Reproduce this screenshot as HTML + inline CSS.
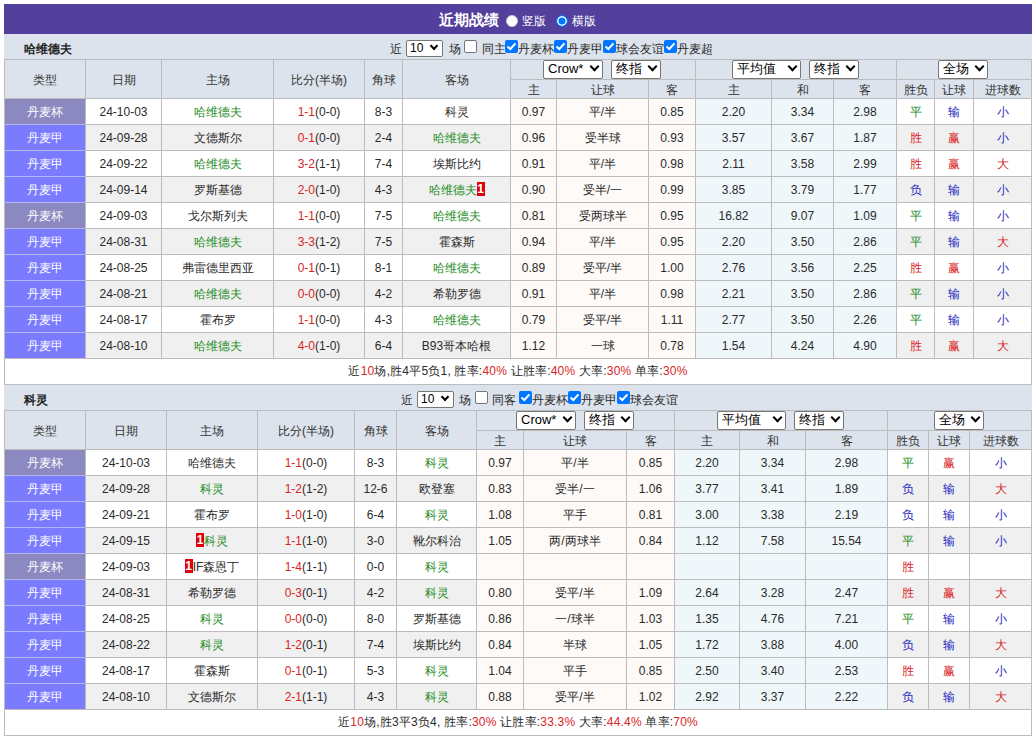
<!DOCTYPE html><html><head><meta charset="utf-8"><style>
*{box-sizing:border-box}
html,body{margin:0;padding:0;background:#fff;width:1034px;height:737px;overflow:hidden}
body{font-family:"Liberation Sans",sans-serif;font-size:12px;color:#2a2a2a;position:relative}
.a{position:absolute}
.bar{position:absolute;left:4px;width:1028px;height:30px;top:4px;background:#52409c}
.tb{position:absolute;left:4px;width:1028px;height:25px;background:#dce3ec}
.ttl{position:absolute;left:20px;font-weight:bold;color:#222;font-size:12px}
.hl{position:absolute;height:1px;background:#bcbcbc}
.vl{position:absolute;width:1px;background:#bcbcbc}
.c{position:absolute;text-align:center;white-space:nowrap;line-height:25px;height:25px;overflow:visible}
.h{color:#333}
.g{color:#228b22}.r{color:#d92424}.b{color:#2626c0}
.w{color:#fff}
.t1{background:#8c88c0;color:#fff}
.t2{background:#7b7bff;color:#fff}
.badge{display:inline-block;background:#e0000b;color:#fff;font-weight:bold;width:8px;height:14px;line-height:14px;font-size:12px;text-align:center;vertical-align:1px}
.sel{position:absolute;height:19px;border:1px solid #767676;border-radius:2px;background:#fff;color:#000;font-size:13px;line-height:16px;padding-left:4px;white-space:nowrap}
.sel i{position:absolute;right:4px;top:5px;width:7px;height:7px;border-right:2px solid #000;border-bottom:2px solid #000;transform:rotate(45deg);top:2px}
.cb{position:absolute;width:13px;height:13px;border-radius:2px}
.cb0{border:1px solid #767676;background:#fff}
.cb1{background:#0075ff}
</style></head><body>
<div class="bar"></div>
<div class="a" style="left:439px;top:11px;color:#fff;font-weight:bold;font-size:15px;line-height:18px">近期战绩</div>
<div class="a" style="left:506px;top:15px;width:12px;height:12px;border-radius:50%;background:#fff;border:1px solid #ccc"></div>
<div class="a" style="left:522px;top:14px;color:#fff;font-size:12px;line-height:15px">竖版</div>
<div class="a" style="left:556px;top:15px;width:12px;height:12px;border-radius:50%;background:#0075ff;box-shadow:inset 0 0 0 1.5px #fff;border:1px solid #0075ff"></div>
<div class="a" style="left:572px;top:14px;color:#fff;font-size:12px;line-height:15px">横版</div>
<div class="tb" style="top:34px"></div>
<div class="ttl" style="top:42px;left:24px;line-height:14px">哈维德夫</div>
<div class="a" style="left:390px;top:42px;line-height:14px">近</div>
<div class="sel" style="left:406px;top:40px;width:37px;height:17px;font-size:12px;line-height:15px;padding-left:3px">10<i style="right:5px;top:2px;width:6px;height:6px"></i></div>
<div class="a" style="left:449px;top:42px;line-height:14px">场</div>
<div class="cb cb0" style="left:464px;top:40px"></div>
<div class="a" style="left:482px;top:42px;line-height:14px">同主</div>
<div class="cb cb1" style="left:505px;top:40px"><svg width="13" height="13" style="position:absolute;left:0;top:0"><path d="M2.5 6.5 L5.3 9 L10.5 3.3" stroke="#fff" stroke-width="2" fill="none"/></svg></div>
<div class="a" style="left:518px;top:42px;line-height:14px">丹麦杯</div>
<div class="cb cb1" style="left:554px;top:40px"><svg width="13" height="13" style="position:absolute;left:0;top:0"><path d="M2.5 6.5 L5.3 9 L10.5 3.3" stroke="#fff" stroke-width="2" fill="none"/></svg></div>
<div class="a" style="left:567px;top:42px;line-height:14px">丹麦甲</div>
<div class="cb cb1" style="left:603px;top:40px"><svg width="13" height="13" style="position:absolute;left:0;top:0"><path d="M2.5 6.5 L5.3 9 L10.5 3.3" stroke="#fff" stroke-width="2" fill="none"/></svg></div>
<div class="a" style="left:616px;top:42px;line-height:14px">球会友谊</div>
<div class="cb cb1" style="left:664px;top:40px"><svg width="13" height="13" style="position:absolute;left:0;top:0"><path d="M2.5 6.5 L5.3 9 L10.5 3.3" stroke="#fff" stroke-width="2" fill="none"/></svg></div>
<div class="a" style="left:677px;top:42px;line-height:14px">丹麦超</div>
<div class="a" style="left:4px;top:59px;width:1028px;height:39px;background:#dce3ec"></div>
<div class="a" style="left:4px;top:98px;width:1028px;height:26px;background:#fff"></div>
<div class="a t1" style="left:4px;top:98px;width:81px;height:26px"></div>
<div class="a" style="left:510px;top:98px;width:185px;height:26px;background:#fdfaf8"></div>
<div class="a" style="left:695px;top:98px;width:201px;height:26px;background:#f0f7fb"></div>
<div class="a" style="left:4px;top:124px;width:1028px;height:26px;background:#f0f0f0"></div>
<div class="a t2" style="left:4px;top:124px;width:81px;height:26px"></div>
<div class="a" style="left:510px;top:124px;width:185px;height:26px;background:#fdfaf8"></div>
<div class="a" style="left:695px;top:124px;width:201px;height:26px;background:#f0f7fb"></div>
<div class="a" style="left:4px;top:150px;width:1028px;height:26px;background:#fff"></div>
<div class="a t2" style="left:4px;top:150px;width:81px;height:26px"></div>
<div class="a" style="left:510px;top:150px;width:185px;height:26px;background:#fdfaf8"></div>
<div class="a" style="left:695px;top:150px;width:201px;height:26px;background:#f0f7fb"></div>
<div class="a" style="left:4px;top:176px;width:1028px;height:26px;background:#f0f0f0"></div>
<div class="a t2" style="left:4px;top:176px;width:81px;height:26px"></div>
<div class="a" style="left:510px;top:176px;width:185px;height:26px;background:#fdfaf8"></div>
<div class="a" style="left:695px;top:176px;width:201px;height:26px;background:#f0f7fb"></div>
<div class="a" style="left:4px;top:202px;width:1028px;height:26px;background:#fff"></div>
<div class="a t1" style="left:4px;top:202px;width:81px;height:26px"></div>
<div class="a" style="left:510px;top:202px;width:185px;height:26px;background:#fdfaf8"></div>
<div class="a" style="left:695px;top:202px;width:201px;height:26px;background:#f0f7fb"></div>
<div class="a" style="left:4px;top:228px;width:1028px;height:26px;background:#f0f0f0"></div>
<div class="a t2" style="left:4px;top:228px;width:81px;height:26px"></div>
<div class="a" style="left:510px;top:228px;width:185px;height:26px;background:#fdfaf8"></div>
<div class="a" style="left:695px;top:228px;width:201px;height:26px;background:#f0f7fb"></div>
<div class="a" style="left:4px;top:254px;width:1028px;height:26px;background:#fff"></div>
<div class="a t2" style="left:4px;top:254px;width:81px;height:26px"></div>
<div class="a" style="left:510px;top:254px;width:185px;height:26px;background:#fdfaf8"></div>
<div class="a" style="left:695px;top:254px;width:201px;height:26px;background:#f0f7fb"></div>
<div class="a" style="left:4px;top:280px;width:1028px;height:26px;background:#f0f0f0"></div>
<div class="a t2" style="left:4px;top:280px;width:81px;height:26px"></div>
<div class="a" style="left:510px;top:280px;width:185px;height:26px;background:#fdfaf8"></div>
<div class="a" style="left:695px;top:280px;width:201px;height:26px;background:#f0f7fb"></div>
<div class="a" style="left:4px;top:306px;width:1028px;height:26px;background:#fff"></div>
<div class="a t2" style="left:4px;top:306px;width:81px;height:26px"></div>
<div class="a" style="left:510px;top:306px;width:185px;height:26px;background:#fdfaf8"></div>
<div class="a" style="left:695px;top:306px;width:201px;height:26px;background:#f0f7fb"></div>
<div class="a" style="left:4px;top:332px;width:1028px;height:26px;background:#f0f0f0"></div>
<div class="a t2" style="left:4px;top:332px;width:81px;height:26px"></div>
<div class="a" style="left:510px;top:332px;width:185px;height:26px;background:#fdfaf8"></div>
<div class="a" style="left:695px;top:332px;width:201px;height:26px;background:#f0f7fb"></div>
<div class="a" style="left:4px;top:358px;width:1028px;height:26px;background:#fff"></div>
<div class="hl" style="left:4px;top:59px;width:1028px"></div>
<div class="hl" style="left:510px;top:79px;width:522px"></div>
<div class="hl" style="left:4px;top:98px;width:1028px"></div>
<div class="hl" style="left:4px;top:124px;width:1028px"></div>
<div class="hl" style="left:5px;top:124px;width:80px;background:#b4b4ee"></div>
<div class="hl" style="left:4px;top:150px;width:1028px"></div>
<div class="hl" style="left:5px;top:150px;width:80px;background:#b4b4ee"></div>
<div class="hl" style="left:4px;top:176px;width:1028px"></div>
<div class="hl" style="left:5px;top:176px;width:80px;background:#b4b4ee"></div>
<div class="hl" style="left:4px;top:202px;width:1028px"></div>
<div class="hl" style="left:5px;top:202px;width:80px;background:#b4b4ee"></div>
<div class="hl" style="left:4px;top:228px;width:1028px"></div>
<div class="hl" style="left:5px;top:228px;width:80px;background:#b4b4ee"></div>
<div class="hl" style="left:4px;top:254px;width:1028px"></div>
<div class="hl" style="left:5px;top:254px;width:80px;background:#b4b4ee"></div>
<div class="hl" style="left:4px;top:280px;width:1028px"></div>
<div class="hl" style="left:5px;top:280px;width:80px;background:#b4b4ee"></div>
<div class="hl" style="left:4px;top:306px;width:1028px"></div>
<div class="hl" style="left:5px;top:306px;width:80px;background:#b4b4ee"></div>
<div class="hl" style="left:4px;top:332px;width:1028px"></div>
<div class="hl" style="left:5px;top:332px;width:80px;background:#b4b4ee"></div>
<div class="hl" style="left:4px;top:358px;width:1028px"></div>
<div class="hl" style="left:4px;top:384px;width:1028px"></div>
<div class="vl" style="left:4px;top:59px;height:326px"></div>
<div class="vl" style="left:85px;top:59px;height:299px"></div>
<div class="vl" style="left:161px;top:59px;height:299px"></div>
<div class="vl" style="left:273px;top:59px;height:299px"></div>
<div class="vl" style="left:364px;top:59px;height:299px"></div>
<div class="vl" style="left:402px;top:59px;height:299px"></div>
<div class="vl" style="left:510px;top:59px;height:299px"></div>
<div class="vl" style="left:556px;top:79px;height:279px"></div>
<div class="vl" style="left:648px;top:79px;height:279px"></div>
<div class="vl" style="left:695px;top:59px;height:299px"></div>
<div class="vl" style="left:771px;top:79px;height:279px"></div>
<div class="vl" style="left:833px;top:79px;height:279px"></div>
<div class="vl" style="left:896px;top:59px;height:299px"></div>
<div class="vl" style="left:934px;top:79px;height:279px"></div>
<div class="vl" style="left:973px;top:79px;height:279px"></div>
<div class="vl" style="left:1031px;top:59px;height:326px"></div>
<div class="c h" style="left:5px;width:80px;top:61px;height:38px;line-height:38px">类型</div>
<div class="c h" style="left:86px;width:75px;top:61px;height:38px;line-height:38px">日期</div>
<div class="c h" style="left:162px;width:111px;top:61px;height:38px;line-height:38px">主场</div>
<div class="c h" style="left:274px;width:90px;top:61px;height:38px;line-height:38px">比分(半场)</div>
<div class="c h" style="left:365px;width:37px;top:61px;height:38px;line-height:38px">角球</div>
<div class="c h" style="left:403px;width:107px;top:61px;height:38px;line-height:38px">客场</div>
<div class="c h" style="left:511px;width:45px;top:81px;height:18px;line-height:18px">主</div>
<div class="c h" style="left:557px;width:91px;top:81px;height:18px;line-height:18px">让球</div>
<div class="c h" style="left:649px;width:46px;top:81px;height:18px;line-height:18px">客</div>
<div class="c h" style="left:696px;width:75px;top:81px;height:18px;line-height:18px">主</div>
<div class="c h" style="left:772px;width:61px;top:81px;height:18px;line-height:18px">和</div>
<div class="c h" style="left:834px;width:62px;top:81px;height:18px;line-height:18px">客</div>
<div class="c h" style="left:897px;width:37px;top:81px;height:18px;line-height:18px">胜负</div>
<div class="c h" style="left:935px;width:38px;top:81px;height:18px;line-height:18px">让球</div>
<div class="c h" style="left:974px;width:57px;top:81px;height:18px;line-height:18px">进球数</div>
<div class="sel" style="left:543px;top:60px;width:60px">Crow*<i></i></div>
<div class="sel" style="left:611px;top:60px;width:50px">终指<i></i></div>
<div class="sel" style="left:732px;top:60px;width:69px">平均值<i></i></div>
<div class="sel" style="left:809px;top:60px;width:50px">终指<i></i></div>
<div class="sel" style="left:938px;top:60px;width:50px">全场<i></i></div>
<div class="c w" style="left:5px;width:80px;top:100px">丹麦杯</div>
<div class="c " style="left:86px;width:75px;top:100px">24-10-03</div>
<div class="c " style="left:162px;width:111px;top:100px"><span class="g">哈维德夫</span></div>
<div class="c " style="left:274px;width:90px;top:100px"><span class="r">1-1</span>(0-0)</div>
<div class="c " style="left:365px;width:37px;top:100px">8-3</div>
<div class="c " style="left:403px;width:107px;top:100px"><span class="">科灵</span></div>
<div class="c " style="left:511px;width:45px;top:100px">0.97</div>
<div class="c " style="left:557px;width:91px;top:100px">平/半</div>
<div class="c " style="left:649px;width:46px;top:100px">0.85</div>
<div class="c " style="left:696px;width:75px;top:100px">2.20</div>
<div class="c " style="left:772px;width:61px;top:100px">3.34</div>
<div class="c " style="left:834px;width:62px;top:100px">2.98</div>
<div class="c " style="left:897px;width:37px;top:100px"><span class="g">平</span></div>
<div class="c " style="left:935px;width:38px;top:100px"><span class="b">输</span></div>
<div class="c " style="left:974px;width:57px;top:100px"><span class="b">小</span></div>
<div class="c w" style="left:5px;width:80px;top:126px">丹麦甲</div>
<div class="c " style="left:86px;width:75px;top:126px">24-09-28</div>
<div class="c " style="left:162px;width:111px;top:126px"><span class="">文德斯尔</span></div>
<div class="c " style="left:274px;width:90px;top:126px"><span class="r">0-1</span>(0-0)</div>
<div class="c " style="left:365px;width:37px;top:126px">2-4</div>
<div class="c " style="left:403px;width:107px;top:126px"><span class="g">哈维德夫</span></div>
<div class="c " style="left:511px;width:45px;top:126px">0.96</div>
<div class="c " style="left:557px;width:91px;top:126px">受半球</div>
<div class="c " style="left:649px;width:46px;top:126px">0.93</div>
<div class="c " style="left:696px;width:75px;top:126px">3.57</div>
<div class="c " style="left:772px;width:61px;top:126px">3.67</div>
<div class="c " style="left:834px;width:62px;top:126px">1.87</div>
<div class="c " style="left:897px;width:37px;top:126px"><span class="r">胜</span></div>
<div class="c " style="left:935px;width:38px;top:126px"><span class="r">赢</span></div>
<div class="c " style="left:974px;width:57px;top:126px"><span class="b">小</span></div>
<div class="c w" style="left:5px;width:80px;top:152px">丹麦甲</div>
<div class="c " style="left:86px;width:75px;top:152px">24-09-22</div>
<div class="c " style="left:162px;width:111px;top:152px"><span class="g">哈维德夫</span></div>
<div class="c " style="left:274px;width:90px;top:152px"><span class="r">3-2</span>(1-1)</div>
<div class="c " style="left:365px;width:37px;top:152px">7-4</div>
<div class="c " style="left:403px;width:107px;top:152px"><span class="">埃斯比约</span></div>
<div class="c " style="left:511px;width:45px;top:152px">0.91</div>
<div class="c " style="left:557px;width:91px;top:152px">平/半</div>
<div class="c " style="left:649px;width:46px;top:152px">0.98</div>
<div class="c " style="left:696px;width:75px;top:152px">2.11</div>
<div class="c " style="left:772px;width:61px;top:152px">3.58</div>
<div class="c " style="left:834px;width:62px;top:152px">2.99</div>
<div class="c " style="left:897px;width:37px;top:152px"><span class="r">胜</span></div>
<div class="c " style="left:935px;width:38px;top:152px"><span class="r">赢</span></div>
<div class="c " style="left:974px;width:57px;top:152px"><span class="r">大</span></div>
<div class="c w" style="left:5px;width:80px;top:178px">丹麦甲</div>
<div class="c " style="left:86px;width:75px;top:178px">24-09-14</div>
<div class="c " style="left:162px;width:111px;top:178px"><span class="">罗斯基德</span></div>
<div class="c " style="left:274px;width:90px;top:178px"><span class="r">2-0</span>(1-0)</div>
<div class="c " style="left:365px;width:37px;top:178px">4-3</div>
<div class="c " style="left:403px;width:107px;top:178px"><span class="g">哈维德夫</span><span class="badge">1</span></div>
<div class="c " style="left:511px;width:45px;top:178px">0.90</div>
<div class="c " style="left:557px;width:91px;top:178px">受半/一</div>
<div class="c " style="left:649px;width:46px;top:178px">0.99</div>
<div class="c " style="left:696px;width:75px;top:178px">3.85</div>
<div class="c " style="left:772px;width:61px;top:178px">3.79</div>
<div class="c " style="left:834px;width:62px;top:178px">1.77</div>
<div class="c " style="left:897px;width:37px;top:178px"><span class="b">负</span></div>
<div class="c " style="left:935px;width:38px;top:178px"><span class="b">输</span></div>
<div class="c " style="left:974px;width:57px;top:178px"><span class="b">小</span></div>
<div class="c w" style="left:5px;width:80px;top:204px">丹麦杯</div>
<div class="c " style="left:86px;width:75px;top:204px">24-09-03</div>
<div class="c " style="left:162px;width:111px;top:204px"><span class="">戈尔斯列夫</span></div>
<div class="c " style="left:274px;width:90px;top:204px"><span class="r">1-1</span>(0-0)</div>
<div class="c " style="left:365px;width:37px;top:204px">7-5</div>
<div class="c " style="left:403px;width:107px;top:204px"><span class="g">哈维德夫</span></div>
<div class="c " style="left:511px;width:45px;top:204px">0.81</div>
<div class="c " style="left:557px;width:91px;top:204px">受两球半</div>
<div class="c " style="left:649px;width:46px;top:204px">0.95</div>
<div class="c " style="left:696px;width:75px;top:204px">16.82</div>
<div class="c " style="left:772px;width:61px;top:204px">9.07</div>
<div class="c " style="left:834px;width:62px;top:204px">1.09</div>
<div class="c " style="left:897px;width:37px;top:204px"><span class="g">平</span></div>
<div class="c " style="left:935px;width:38px;top:204px"><span class="b">输</span></div>
<div class="c " style="left:974px;width:57px;top:204px"><span class="b">小</span></div>
<div class="c w" style="left:5px;width:80px;top:230px">丹麦甲</div>
<div class="c " style="left:86px;width:75px;top:230px">24-08-31</div>
<div class="c " style="left:162px;width:111px;top:230px"><span class="g">哈维德夫</span></div>
<div class="c " style="left:274px;width:90px;top:230px"><span class="r">3-3</span>(1-2)</div>
<div class="c " style="left:365px;width:37px;top:230px">7-5</div>
<div class="c " style="left:403px;width:107px;top:230px"><span class="">霍森斯</span></div>
<div class="c " style="left:511px;width:45px;top:230px">0.94</div>
<div class="c " style="left:557px;width:91px;top:230px">平/半</div>
<div class="c " style="left:649px;width:46px;top:230px">0.95</div>
<div class="c " style="left:696px;width:75px;top:230px">2.20</div>
<div class="c " style="left:772px;width:61px;top:230px">3.50</div>
<div class="c " style="left:834px;width:62px;top:230px">2.86</div>
<div class="c " style="left:897px;width:37px;top:230px"><span class="g">平</span></div>
<div class="c " style="left:935px;width:38px;top:230px"><span class="b">输</span></div>
<div class="c " style="left:974px;width:57px;top:230px"><span class="r">大</span></div>
<div class="c w" style="left:5px;width:80px;top:256px">丹麦甲</div>
<div class="c " style="left:86px;width:75px;top:256px">24-08-25</div>
<div class="c " style="left:162px;width:111px;top:256px"><span class="">弗雷德里西亚</span></div>
<div class="c " style="left:274px;width:90px;top:256px"><span class="r">0-1</span>(0-1)</div>
<div class="c " style="left:365px;width:37px;top:256px">8-1</div>
<div class="c " style="left:403px;width:107px;top:256px"><span class="g">哈维德夫</span></div>
<div class="c " style="left:511px;width:45px;top:256px">0.89</div>
<div class="c " style="left:557px;width:91px;top:256px">受平/半</div>
<div class="c " style="left:649px;width:46px;top:256px">1.00</div>
<div class="c " style="left:696px;width:75px;top:256px">2.76</div>
<div class="c " style="left:772px;width:61px;top:256px">3.56</div>
<div class="c " style="left:834px;width:62px;top:256px">2.25</div>
<div class="c " style="left:897px;width:37px;top:256px"><span class="r">胜</span></div>
<div class="c " style="left:935px;width:38px;top:256px"><span class="r">赢</span></div>
<div class="c " style="left:974px;width:57px;top:256px"><span class="b">小</span></div>
<div class="c w" style="left:5px;width:80px;top:282px">丹麦甲</div>
<div class="c " style="left:86px;width:75px;top:282px">24-08-21</div>
<div class="c " style="left:162px;width:111px;top:282px"><span class="g">哈维德夫</span></div>
<div class="c " style="left:274px;width:90px;top:282px"><span class="r">0-0</span>(0-0)</div>
<div class="c " style="left:365px;width:37px;top:282px">4-2</div>
<div class="c " style="left:403px;width:107px;top:282px"><span class="">希勒罗德</span></div>
<div class="c " style="left:511px;width:45px;top:282px">0.91</div>
<div class="c " style="left:557px;width:91px;top:282px">平/半</div>
<div class="c " style="left:649px;width:46px;top:282px">0.98</div>
<div class="c " style="left:696px;width:75px;top:282px">2.21</div>
<div class="c " style="left:772px;width:61px;top:282px">3.50</div>
<div class="c " style="left:834px;width:62px;top:282px">2.86</div>
<div class="c " style="left:897px;width:37px;top:282px"><span class="g">平</span></div>
<div class="c " style="left:935px;width:38px;top:282px"><span class="b">输</span></div>
<div class="c " style="left:974px;width:57px;top:282px"><span class="b">小</span></div>
<div class="c w" style="left:5px;width:80px;top:308px">丹麦甲</div>
<div class="c " style="left:86px;width:75px;top:308px">24-08-17</div>
<div class="c " style="left:162px;width:111px;top:308px"><span class="">霍布罗</span></div>
<div class="c " style="left:274px;width:90px;top:308px"><span class="r">1-1</span>(0-0)</div>
<div class="c " style="left:365px;width:37px;top:308px">4-3</div>
<div class="c " style="left:403px;width:107px;top:308px"><span class="g">哈维德夫</span></div>
<div class="c " style="left:511px;width:45px;top:308px">0.79</div>
<div class="c " style="left:557px;width:91px;top:308px">受平/半</div>
<div class="c " style="left:649px;width:46px;top:308px">1.11</div>
<div class="c " style="left:696px;width:75px;top:308px">2.77</div>
<div class="c " style="left:772px;width:61px;top:308px">3.50</div>
<div class="c " style="left:834px;width:62px;top:308px">2.26</div>
<div class="c " style="left:897px;width:37px;top:308px"><span class="g">平</span></div>
<div class="c " style="left:935px;width:38px;top:308px"><span class="b">输</span></div>
<div class="c " style="left:974px;width:57px;top:308px"><span class="b">小</span></div>
<div class="c w" style="left:5px;width:80px;top:334px">丹麦甲</div>
<div class="c " style="left:86px;width:75px;top:334px">24-08-10</div>
<div class="c " style="left:162px;width:111px;top:334px"><span class="g">哈维德夫</span></div>
<div class="c " style="left:274px;width:90px;top:334px"><span class="r">4-0</span>(1-0)</div>
<div class="c " style="left:365px;width:37px;top:334px">6-4</div>
<div class="c " style="left:403px;width:107px;top:334px"><span class="">B93哥本哈根</span></div>
<div class="c " style="left:511px;width:45px;top:334px">1.12</div>
<div class="c " style="left:557px;width:91px;top:334px">一球</div>
<div class="c " style="left:649px;width:46px;top:334px">0.78</div>
<div class="c " style="left:696px;width:75px;top:334px">1.54</div>
<div class="c " style="left:772px;width:61px;top:334px">4.24</div>
<div class="c " style="left:834px;width:62px;top:334px">4.90</div>
<div class="c " style="left:897px;width:37px;top:334px"><span class="r">胜</span></div>
<div class="c " style="left:935px;width:38px;top:334px"><span class="r">赢</span></div>
<div class="c " style="left:974px;width:57px;top:334px"><span class="r">大</span></div>
<div class="c" style="left:5px;width:1026px;top:359px;letter-spacing:0.2px">近<span class="r">10</span>场,胜4平5负1, 胜率:<span class="r">40%</span> 让胜率:<span class="r">40%</span> 大率:<span class="r">30%</span> 单率:<span class="r">30%</span></div>
<div class="tb" style="top:385px"></div>
<div class="ttl" style="top:393px;left:24px;line-height:14px">科灵</div>
<div class="a" style="left:401px;top:393px;line-height:14px">近</div>
<div class="sel" style="left:417px;top:391px;width:37px;height:17px;font-size:12px;line-height:15px;padding-left:3px">10<i style="right:5px;top:2px;width:6px;height:6px"></i></div>
<div class="a" style="left:459px;top:393px;line-height:14px">场</div>
<div class="cb cb0" style="left:475px;top:391px"></div>
<div class="a" style="left:492px;top:393px;line-height:14px">同客</div>
<div class="cb cb1" style="left:519px;top:391px"><svg width="13" height="13" style="position:absolute;left:0;top:0"><path d="M2.5 6.5 L5.3 9 L10.5 3.3" stroke="#fff" stroke-width="2" fill="none"/></svg></div>
<div class="a" style="left:532px;top:393px;line-height:14px">丹麦杯</div>
<div class="cb cb1" style="left:568px;top:391px"><svg width="13" height="13" style="position:absolute;left:0;top:0"><path d="M2.5 6.5 L5.3 9 L10.5 3.3" stroke="#fff" stroke-width="2" fill="none"/></svg></div>
<div class="a" style="left:581px;top:393px;line-height:14px">丹麦甲</div>
<div class="cb cb1" style="left:617px;top:391px"><svg width="13" height="13" style="position:absolute;left:0;top:0"><path d="M2.5 6.5 L5.3 9 L10.5 3.3" stroke="#fff" stroke-width="2" fill="none"/></svg></div>
<div class="a" style="left:630px;top:393px;line-height:14px">球会友谊</div>
<div class="a" style="left:4px;top:410px;width:1028px;height:39px;background:#dce3ec"></div>
<div class="a" style="left:4px;top:449px;width:1028px;height:26px;background:#fff"></div>
<div class="a t1" style="left:4px;top:449px;width:81px;height:26px"></div>
<div class="a" style="left:476px;top:449px;width:198px;height:26px;background:#fdfaf8"></div>
<div class="a" style="left:674px;top:449px;width:213px;height:26px;background:#f0f7fb"></div>
<div class="a" style="left:4px;top:475px;width:1028px;height:26px;background:#f0f0f0"></div>
<div class="a t2" style="left:4px;top:475px;width:81px;height:26px"></div>
<div class="a" style="left:476px;top:475px;width:198px;height:26px;background:#fdfaf8"></div>
<div class="a" style="left:674px;top:475px;width:213px;height:26px;background:#f0f7fb"></div>
<div class="a" style="left:4px;top:501px;width:1028px;height:26px;background:#fff"></div>
<div class="a t2" style="left:4px;top:501px;width:81px;height:26px"></div>
<div class="a" style="left:476px;top:501px;width:198px;height:26px;background:#fdfaf8"></div>
<div class="a" style="left:674px;top:501px;width:213px;height:26px;background:#f0f7fb"></div>
<div class="a" style="left:4px;top:527px;width:1028px;height:26px;background:#f0f0f0"></div>
<div class="a t2" style="left:4px;top:527px;width:81px;height:26px"></div>
<div class="a" style="left:476px;top:527px;width:198px;height:26px;background:#fdfaf8"></div>
<div class="a" style="left:674px;top:527px;width:213px;height:26px;background:#f0f7fb"></div>
<div class="a" style="left:4px;top:553px;width:1028px;height:26px;background:#fff"></div>
<div class="a t1" style="left:4px;top:553px;width:81px;height:26px"></div>
<div class="a" style="left:476px;top:553px;width:198px;height:26px;background:#fdfaf8"></div>
<div class="a" style="left:674px;top:553px;width:213px;height:26px;background:#f0f7fb"></div>
<div class="a" style="left:4px;top:579px;width:1028px;height:26px;background:#f0f0f0"></div>
<div class="a t2" style="left:4px;top:579px;width:81px;height:26px"></div>
<div class="a" style="left:476px;top:579px;width:198px;height:26px;background:#fdfaf8"></div>
<div class="a" style="left:674px;top:579px;width:213px;height:26px;background:#f0f7fb"></div>
<div class="a" style="left:4px;top:605px;width:1028px;height:26px;background:#fff"></div>
<div class="a t2" style="left:4px;top:605px;width:81px;height:26px"></div>
<div class="a" style="left:476px;top:605px;width:198px;height:26px;background:#fdfaf8"></div>
<div class="a" style="left:674px;top:605px;width:213px;height:26px;background:#f0f7fb"></div>
<div class="a" style="left:4px;top:631px;width:1028px;height:26px;background:#f0f0f0"></div>
<div class="a t2" style="left:4px;top:631px;width:81px;height:26px"></div>
<div class="a" style="left:476px;top:631px;width:198px;height:26px;background:#fdfaf8"></div>
<div class="a" style="left:674px;top:631px;width:213px;height:26px;background:#f0f7fb"></div>
<div class="a" style="left:4px;top:657px;width:1028px;height:26px;background:#fff"></div>
<div class="a t2" style="left:4px;top:657px;width:81px;height:26px"></div>
<div class="a" style="left:476px;top:657px;width:198px;height:26px;background:#fdfaf8"></div>
<div class="a" style="left:674px;top:657px;width:213px;height:26px;background:#f0f7fb"></div>
<div class="a" style="left:4px;top:683px;width:1028px;height:26px;background:#f0f0f0"></div>
<div class="a t2" style="left:4px;top:683px;width:81px;height:26px"></div>
<div class="a" style="left:476px;top:683px;width:198px;height:26px;background:#fdfaf8"></div>
<div class="a" style="left:674px;top:683px;width:213px;height:26px;background:#f0f7fb"></div>
<div class="a" style="left:4px;top:709px;width:1028px;height:26px;background:#fff"></div>
<div class="hl" style="left:4px;top:410px;width:1028px"></div>
<div class="hl" style="left:476px;top:430px;width:556px"></div>
<div class="hl" style="left:4px;top:449px;width:1028px"></div>
<div class="hl" style="left:4px;top:475px;width:1028px"></div>
<div class="hl" style="left:5px;top:475px;width:80px;background:#b4b4ee"></div>
<div class="hl" style="left:4px;top:501px;width:1028px"></div>
<div class="hl" style="left:5px;top:501px;width:80px;background:#b4b4ee"></div>
<div class="hl" style="left:4px;top:527px;width:1028px"></div>
<div class="hl" style="left:5px;top:527px;width:80px;background:#b4b4ee"></div>
<div class="hl" style="left:4px;top:553px;width:1028px"></div>
<div class="hl" style="left:5px;top:553px;width:80px;background:#b4b4ee"></div>
<div class="hl" style="left:4px;top:579px;width:1028px"></div>
<div class="hl" style="left:5px;top:579px;width:80px;background:#b4b4ee"></div>
<div class="hl" style="left:4px;top:605px;width:1028px"></div>
<div class="hl" style="left:5px;top:605px;width:80px;background:#b4b4ee"></div>
<div class="hl" style="left:4px;top:631px;width:1028px"></div>
<div class="hl" style="left:5px;top:631px;width:80px;background:#b4b4ee"></div>
<div class="hl" style="left:4px;top:657px;width:1028px"></div>
<div class="hl" style="left:5px;top:657px;width:80px;background:#b4b4ee"></div>
<div class="hl" style="left:4px;top:683px;width:1028px"></div>
<div class="hl" style="left:5px;top:683px;width:80px;background:#b4b4ee"></div>
<div class="hl" style="left:4px;top:709px;width:1028px"></div>
<div class="hl" style="left:4px;top:735px;width:1028px"></div>
<div class="vl" style="left:4px;top:410px;height:326px"></div>
<div class="vl" style="left:85px;top:410px;height:299px"></div>
<div class="vl" style="left:166px;top:410px;height:299px"></div>
<div class="vl" style="left:257px;top:410px;height:299px"></div>
<div class="vl" style="left:354px;top:410px;height:299px"></div>
<div class="vl" style="left:396px;top:410px;height:299px"></div>
<div class="vl" style="left:476px;top:410px;height:299px"></div>
<div class="vl" style="left:523px;top:430px;height:279px"></div>
<div class="vl" style="left:626px;top:430px;height:279px"></div>
<div class="vl" style="left:674px;top:410px;height:299px"></div>
<div class="vl" style="left:739px;top:430px;height:279px"></div>
<div class="vl" style="left:805px;top:430px;height:279px"></div>
<div class="vl" style="left:887px;top:410px;height:299px"></div>
<div class="vl" style="left:928px;top:430px;height:279px"></div>
<div class="vl" style="left:969px;top:430px;height:279px"></div>
<div class="vl" style="left:1031px;top:410px;height:326px"></div>
<div class="c h" style="left:5px;width:80px;top:412px;height:38px;line-height:38px">类型</div>
<div class="c h" style="left:86px;width:80px;top:412px;height:38px;line-height:38px">日期</div>
<div class="c h" style="left:167px;width:90px;top:412px;height:38px;line-height:38px">主场</div>
<div class="c h" style="left:258px;width:96px;top:412px;height:38px;line-height:38px">比分(半场)</div>
<div class="c h" style="left:355px;width:41px;top:412px;height:38px;line-height:38px">角球</div>
<div class="c h" style="left:397px;width:79px;top:412px;height:38px;line-height:38px">客场</div>
<div class="c h" style="left:477px;width:46px;top:432px;height:18px;line-height:18px">主</div>
<div class="c h" style="left:524px;width:102px;top:432px;height:18px;line-height:18px">让球</div>
<div class="c h" style="left:627px;width:47px;top:432px;height:18px;line-height:18px">客</div>
<div class="c h" style="left:675px;width:64px;top:432px;height:18px;line-height:18px">主</div>
<div class="c h" style="left:740px;width:65px;top:432px;height:18px;line-height:18px">和</div>
<div class="c h" style="left:806px;width:81px;top:432px;height:18px;line-height:18px">客</div>
<div class="c h" style="left:888px;width:40px;top:432px;height:18px;line-height:18px">胜负</div>
<div class="c h" style="left:929px;width:40px;top:432px;height:18px;line-height:18px">让球</div>
<div class="c h" style="left:970px;width:61px;top:432px;height:18px;line-height:18px">进球数</div>
<div class="sel" style="left:516px;top:411px;width:60px">Crow*<i></i></div>
<div class="sel" style="left:584px;top:411px;width:50px">终指<i></i></div>
<div class="sel" style="left:717px;top:411px;width:69px">平均值<i></i></div>
<div class="sel" style="left:794px;top:411px;width:50px">终指<i></i></div>
<div class="sel" style="left:934px;top:411px;width:50px">全场<i></i></div>
<div class="c w" style="left:5px;width:80px;top:451px">丹麦杯</div>
<div class="c " style="left:86px;width:80px;top:451px">24-10-03</div>
<div class="c " style="left:167px;width:90px;top:451px"><span class="">哈维德夫</span></div>
<div class="c " style="left:258px;width:96px;top:451px"><span class="r">1-1</span>(0-0)</div>
<div class="c " style="left:355px;width:41px;top:451px">8-3</div>
<div class="c " style="left:397px;width:79px;top:451px"><span class="g">科灵</span></div>
<div class="c " style="left:477px;width:46px;top:451px">0.97</div>
<div class="c " style="left:524px;width:102px;top:451px">平/半</div>
<div class="c " style="left:627px;width:47px;top:451px">0.85</div>
<div class="c " style="left:675px;width:64px;top:451px">2.20</div>
<div class="c " style="left:740px;width:65px;top:451px">3.34</div>
<div class="c " style="left:806px;width:81px;top:451px">2.98</div>
<div class="c " style="left:888px;width:40px;top:451px"><span class="g">平</span></div>
<div class="c " style="left:929px;width:40px;top:451px"><span class="r">赢</span></div>
<div class="c " style="left:970px;width:61px;top:451px"><span class="b">小</span></div>
<div class="c w" style="left:5px;width:80px;top:477px">丹麦甲</div>
<div class="c " style="left:86px;width:80px;top:477px">24-09-28</div>
<div class="c " style="left:167px;width:90px;top:477px"><span class="g">科灵</span></div>
<div class="c " style="left:258px;width:96px;top:477px"><span class="r">1-2</span>(1-2)</div>
<div class="c " style="left:355px;width:41px;top:477px">12-6</div>
<div class="c " style="left:397px;width:79px;top:477px"><span class="">欧登塞</span></div>
<div class="c " style="left:477px;width:46px;top:477px">0.83</div>
<div class="c " style="left:524px;width:102px;top:477px">受半/一</div>
<div class="c " style="left:627px;width:47px;top:477px">1.06</div>
<div class="c " style="left:675px;width:64px;top:477px">3.77</div>
<div class="c " style="left:740px;width:65px;top:477px">3.41</div>
<div class="c " style="left:806px;width:81px;top:477px">1.89</div>
<div class="c " style="left:888px;width:40px;top:477px"><span class="b">负</span></div>
<div class="c " style="left:929px;width:40px;top:477px"><span class="b">输</span></div>
<div class="c " style="left:970px;width:61px;top:477px"><span class="r">大</span></div>
<div class="c w" style="left:5px;width:80px;top:503px">丹麦甲</div>
<div class="c " style="left:86px;width:80px;top:503px">24-09-21</div>
<div class="c " style="left:167px;width:90px;top:503px"><span class="">霍布罗</span></div>
<div class="c " style="left:258px;width:96px;top:503px"><span class="r">1-0</span>(1-0)</div>
<div class="c " style="left:355px;width:41px;top:503px">6-4</div>
<div class="c " style="left:397px;width:79px;top:503px"><span class="g">科灵</span></div>
<div class="c " style="left:477px;width:46px;top:503px">1.08</div>
<div class="c " style="left:524px;width:102px;top:503px">平手</div>
<div class="c " style="left:627px;width:47px;top:503px">0.81</div>
<div class="c " style="left:675px;width:64px;top:503px">3.00</div>
<div class="c " style="left:740px;width:65px;top:503px">3.38</div>
<div class="c " style="left:806px;width:81px;top:503px">2.19</div>
<div class="c " style="left:888px;width:40px;top:503px"><span class="b">负</span></div>
<div class="c " style="left:929px;width:40px;top:503px"><span class="b">输</span></div>
<div class="c " style="left:970px;width:61px;top:503px"><span class="b">小</span></div>
<div class="c w" style="left:5px;width:80px;top:529px">丹麦甲</div>
<div class="c " style="left:86px;width:80px;top:529px">24-09-15</div>
<div class="c " style="left:167px;width:90px;top:529px"><span class="badge">1</span><span class="g">科灵</span></div>
<div class="c " style="left:258px;width:96px;top:529px"><span class="r">1-1</span>(1-0)</div>
<div class="c " style="left:355px;width:41px;top:529px">3-0</div>
<div class="c " style="left:397px;width:79px;top:529px"><span class="">靴尔科治</span></div>
<div class="c " style="left:477px;width:46px;top:529px">1.05</div>
<div class="c " style="left:524px;width:102px;top:529px">两/两球半</div>
<div class="c " style="left:627px;width:47px;top:529px">0.84</div>
<div class="c " style="left:675px;width:64px;top:529px">1.12</div>
<div class="c " style="left:740px;width:65px;top:529px">7.58</div>
<div class="c " style="left:806px;width:81px;top:529px">15.54</div>
<div class="c " style="left:888px;width:40px;top:529px"><span class="g">平</span></div>
<div class="c " style="left:929px;width:40px;top:529px"><span class="b">输</span></div>
<div class="c " style="left:970px;width:61px;top:529px"><span class="b">小</span></div>
<div class="c w" style="left:5px;width:80px;top:555px">丹麦杯</div>
<div class="c " style="left:86px;width:80px;top:555px">24-09-03</div>
<div class="c " style="left:167px;width:90px;top:555px"><span class="badge">1</span><span class="">IF森恩丁</span></div>
<div class="c " style="left:258px;width:96px;top:555px"><span class="r">1-4</span>(1-1)</div>
<div class="c " style="left:355px;width:41px;top:555px">0-0</div>
<div class="c " style="left:397px;width:79px;top:555px"><span class="g">科灵</span></div>
<div class="c " style="left:477px;width:46px;top:555px"></div>
<div class="c " style="left:524px;width:102px;top:555px"></div>
<div class="c " style="left:627px;width:47px;top:555px"></div>
<div class="c " style="left:675px;width:64px;top:555px"></div>
<div class="c " style="left:740px;width:65px;top:555px"></div>
<div class="c " style="left:806px;width:81px;top:555px"></div>
<div class="c " style="left:888px;width:40px;top:555px"><span class="r">胜</span></div>
<div class="c " style="left:929px;width:40px;top:555px"><span class=""></span></div>
<div class="c " style="left:970px;width:61px;top:555px"><span class=""></span></div>
<div class="c w" style="left:5px;width:80px;top:581px">丹麦甲</div>
<div class="c " style="left:86px;width:80px;top:581px">24-08-31</div>
<div class="c " style="left:167px;width:90px;top:581px"><span class="">希勒罗德</span></div>
<div class="c " style="left:258px;width:96px;top:581px"><span class="r">0-3</span>(0-1)</div>
<div class="c " style="left:355px;width:41px;top:581px">4-2</div>
<div class="c " style="left:397px;width:79px;top:581px"><span class="g">科灵</span></div>
<div class="c " style="left:477px;width:46px;top:581px">0.80</div>
<div class="c " style="left:524px;width:102px;top:581px">受平/半</div>
<div class="c " style="left:627px;width:47px;top:581px">1.09</div>
<div class="c " style="left:675px;width:64px;top:581px">2.64</div>
<div class="c " style="left:740px;width:65px;top:581px">3.28</div>
<div class="c " style="left:806px;width:81px;top:581px">2.47</div>
<div class="c " style="left:888px;width:40px;top:581px"><span class="r">胜</span></div>
<div class="c " style="left:929px;width:40px;top:581px"><span class="r">赢</span></div>
<div class="c " style="left:970px;width:61px;top:581px"><span class="r">大</span></div>
<div class="c w" style="left:5px;width:80px;top:607px">丹麦甲</div>
<div class="c " style="left:86px;width:80px;top:607px">24-08-25</div>
<div class="c " style="left:167px;width:90px;top:607px"><span class="g">科灵</span></div>
<div class="c " style="left:258px;width:96px;top:607px"><span class="r">0-0</span>(0-0)</div>
<div class="c " style="left:355px;width:41px;top:607px">8-0</div>
<div class="c " style="left:397px;width:79px;top:607px"><span class="">罗斯基德</span></div>
<div class="c " style="left:477px;width:46px;top:607px">0.86</div>
<div class="c " style="left:524px;width:102px;top:607px">一/球半</div>
<div class="c " style="left:627px;width:47px;top:607px">1.03</div>
<div class="c " style="left:675px;width:64px;top:607px">1.35</div>
<div class="c " style="left:740px;width:65px;top:607px">4.76</div>
<div class="c " style="left:806px;width:81px;top:607px">7.21</div>
<div class="c " style="left:888px;width:40px;top:607px"><span class="g">平</span></div>
<div class="c " style="left:929px;width:40px;top:607px"><span class="b">输</span></div>
<div class="c " style="left:970px;width:61px;top:607px"><span class="b">小</span></div>
<div class="c w" style="left:5px;width:80px;top:633px">丹麦甲</div>
<div class="c " style="left:86px;width:80px;top:633px">24-08-22</div>
<div class="c " style="left:167px;width:90px;top:633px"><span class="g">科灵</span></div>
<div class="c " style="left:258px;width:96px;top:633px"><span class="r">1-2</span>(0-1)</div>
<div class="c " style="left:355px;width:41px;top:633px">7-4</div>
<div class="c " style="left:397px;width:79px;top:633px"><span class="">埃斯比约</span></div>
<div class="c " style="left:477px;width:46px;top:633px">0.84</div>
<div class="c " style="left:524px;width:102px;top:633px">半球</div>
<div class="c " style="left:627px;width:47px;top:633px">1.05</div>
<div class="c " style="left:675px;width:64px;top:633px">1.72</div>
<div class="c " style="left:740px;width:65px;top:633px">3.88</div>
<div class="c " style="left:806px;width:81px;top:633px">4.00</div>
<div class="c " style="left:888px;width:40px;top:633px"><span class="b">负</span></div>
<div class="c " style="left:929px;width:40px;top:633px"><span class="b">输</span></div>
<div class="c " style="left:970px;width:61px;top:633px"><span class="r">大</span></div>
<div class="c w" style="left:5px;width:80px;top:659px">丹麦甲</div>
<div class="c " style="left:86px;width:80px;top:659px">24-08-17</div>
<div class="c " style="left:167px;width:90px;top:659px"><span class="">霍森斯</span></div>
<div class="c " style="left:258px;width:96px;top:659px"><span class="r">0-1</span>(0-1)</div>
<div class="c " style="left:355px;width:41px;top:659px">5-3</div>
<div class="c " style="left:397px;width:79px;top:659px"><span class="g">科灵</span></div>
<div class="c " style="left:477px;width:46px;top:659px">1.04</div>
<div class="c " style="left:524px;width:102px;top:659px">平手</div>
<div class="c " style="left:627px;width:47px;top:659px">0.85</div>
<div class="c " style="left:675px;width:64px;top:659px">2.50</div>
<div class="c " style="left:740px;width:65px;top:659px">3.40</div>
<div class="c " style="left:806px;width:81px;top:659px">2.53</div>
<div class="c " style="left:888px;width:40px;top:659px"><span class="r">胜</span></div>
<div class="c " style="left:929px;width:40px;top:659px"><span class="r">赢</span></div>
<div class="c " style="left:970px;width:61px;top:659px"><span class="b">小</span></div>
<div class="c w" style="left:5px;width:80px;top:685px">丹麦甲</div>
<div class="c " style="left:86px;width:80px;top:685px">24-08-10</div>
<div class="c " style="left:167px;width:90px;top:685px"><span class="">文德斯尔</span></div>
<div class="c " style="left:258px;width:96px;top:685px"><span class="r">2-1</span>(1-1)</div>
<div class="c " style="left:355px;width:41px;top:685px">4-3</div>
<div class="c " style="left:397px;width:79px;top:685px"><span class="g">科灵</span></div>
<div class="c " style="left:477px;width:46px;top:685px">0.88</div>
<div class="c " style="left:524px;width:102px;top:685px">受平/半</div>
<div class="c " style="left:627px;width:47px;top:685px">1.02</div>
<div class="c " style="left:675px;width:64px;top:685px">2.92</div>
<div class="c " style="left:740px;width:65px;top:685px">3.37</div>
<div class="c " style="left:806px;width:81px;top:685px">2.22</div>
<div class="c " style="left:888px;width:40px;top:685px"><span class="b">负</span></div>
<div class="c " style="left:929px;width:40px;top:685px"><span class="b">输</span></div>
<div class="c " style="left:970px;width:61px;top:685px"><span class="r">大</span></div>
<div class="c" style="left:5px;width:1026px;top:710px;letter-spacing:0.2px">近<span class="r">10</span>场,胜3平3负4, 胜率:<span class="r">30%</span> 让胜率:<span class="r">33.3%</span> 大率:<span class="r">44.4%</span> 单率:<span class="r">70%</span></div>
</body></html>
